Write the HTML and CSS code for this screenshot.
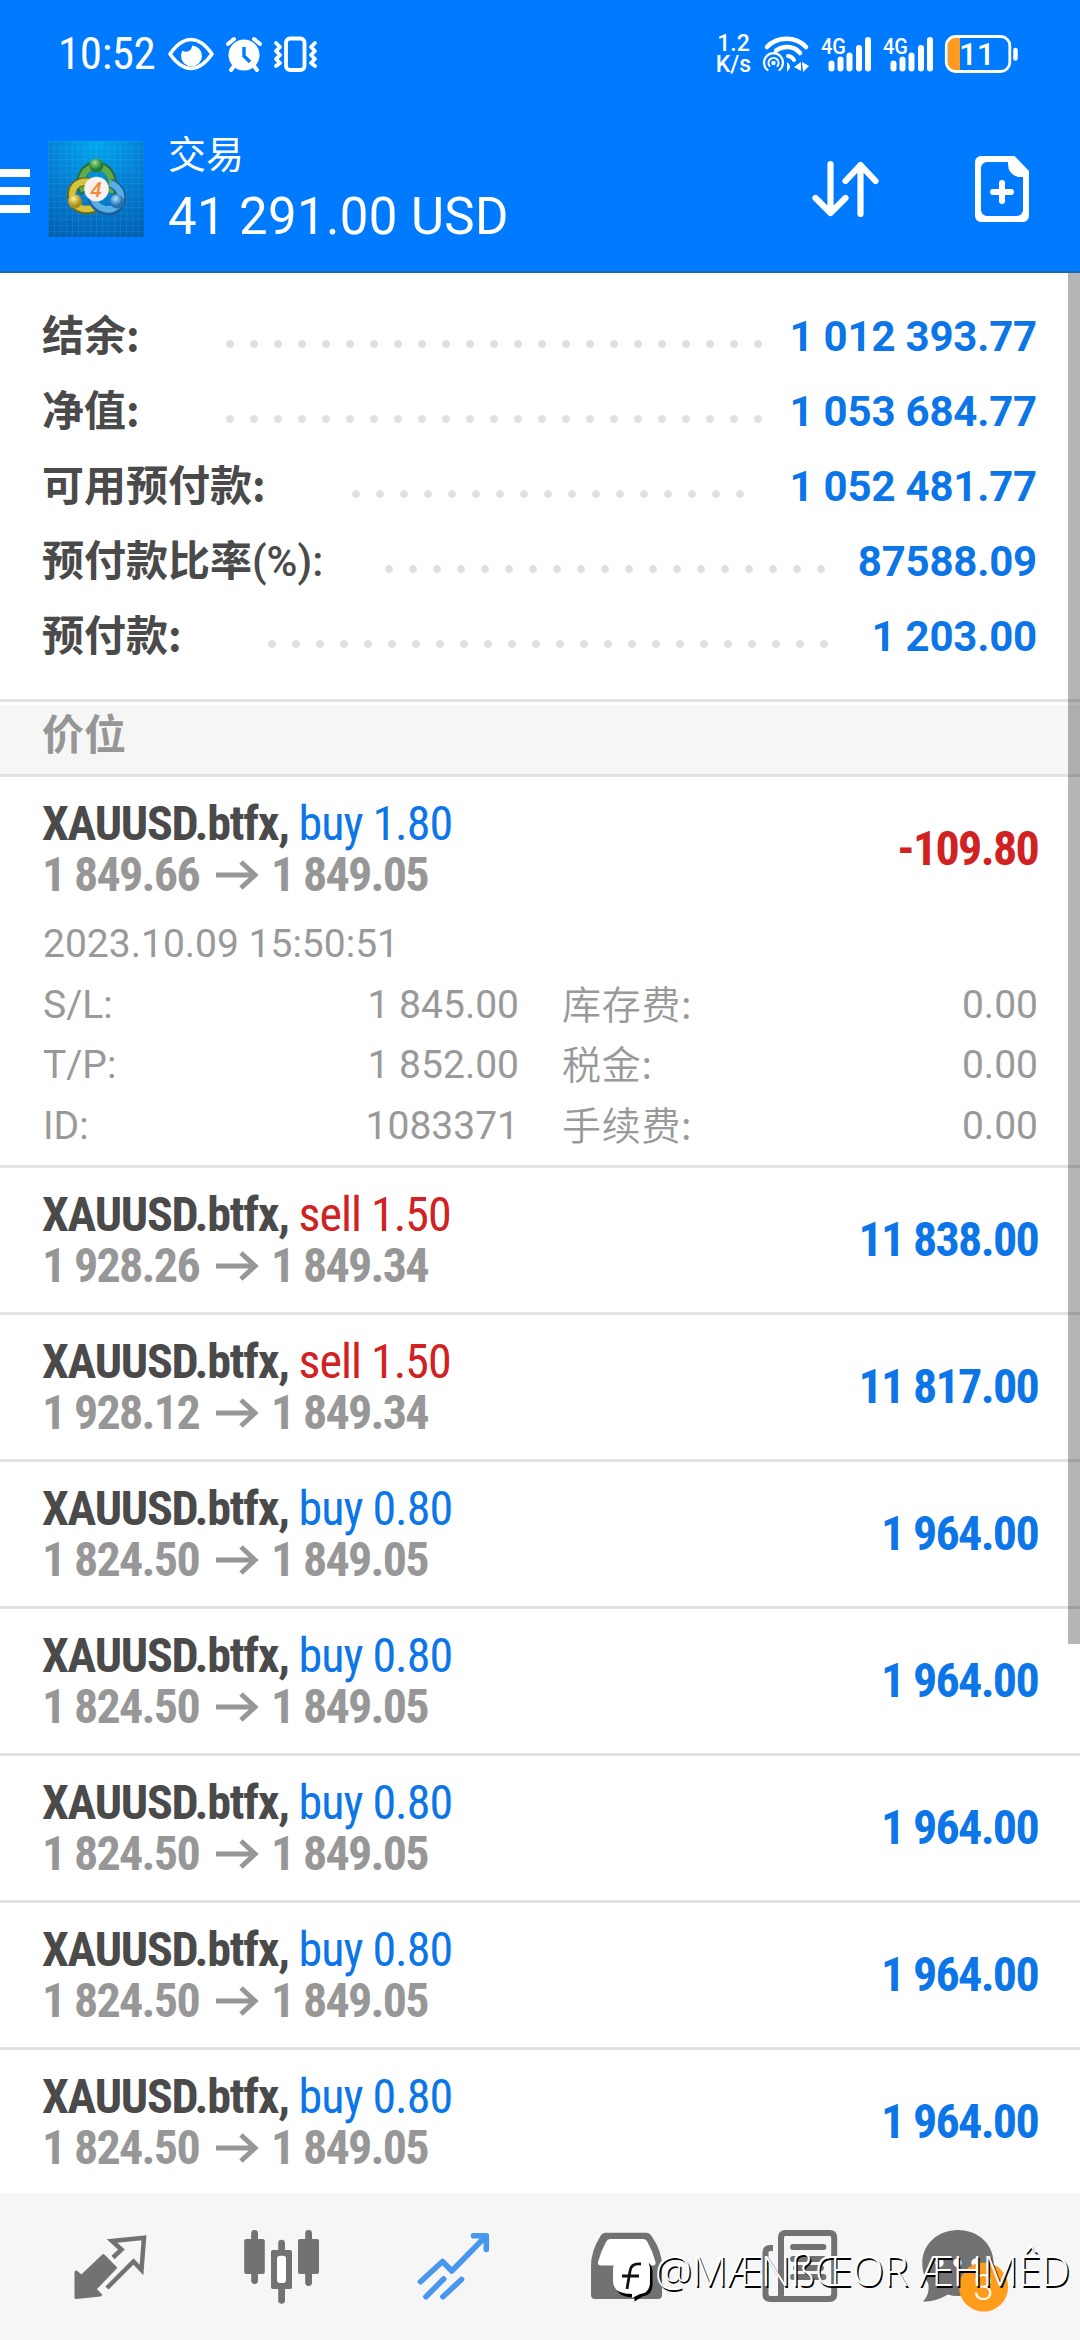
FILE: index.html
```
<!DOCTYPE html>
<html lang="zh-CN">
<head>
<meta charset="utf-8">
<title>交易</title>
<link rel="stylesheet" href="styles.css">
</head>
<body>
<div class="screen">
  <header class="top">
    <div class="status">
      <span class="clock">10:52</span>
      <svg class="st" width="46" height="36" viewBox="0 0 46 36"><path d="M2 18C9 8 15 3.500 23 3.500S37 8 44 18C37 28 31 32.500 23 32.500S9 28 2 18Z" fill="none" stroke="#fff" stroke-width="3.600" stroke-linejoin="round"/><path d="M24 9.500a10.500 10.500 0 1 1-11 10.500q0-3 1.500-5.500a6 6 0 0 0 9.500-5Z" fill="#fff"/></svg>
      <svg class="st" width="36" height="36" viewBox="0 0 36 36"><circle cx="18" cy="19" r="15.500" fill="#fff"/><path d="M2 8l6-5M34 8l-6-5M8 30l-3 4M28 30l3 4" stroke="#fff" stroke-width="4" stroke-linecap="round"/><path d="M18 11v9l6 6" fill="none" stroke="#007aff" stroke-width="3.400"/></svg>
      <svg class="st" width="43" height="36" viewBox="0 0 43 36"><g fill="none" stroke="#fff" stroke-width="3.800" stroke-linejoin="round"><rect x="12" y="2.500" width="18.500" height="31.500" rx="4"/><path d="M2 7l4 4-4 4 4 4-4 4 4 4-4 3" stroke-linecap="round"/><path d="M41 7l-4 4 4 4-4 4 4 4-4 4 4 3" stroke-linecap="round"/></g></svg>
      <div class="speed"><span>1.2</span><span>K/s</span></div>
      <svg class="st" width="46" height="36" viewBox="0 0 46 36"><g fill="none" stroke="#fff" stroke-linecap="round"><path d="M4 11C14 0 33 0 43 11" stroke-width="4.500"/><path d="M13 14.500c8-5.500 18-4.500 24 2.500" stroke-width="4.500"/><path d="M25 20q4 .5 6 4" stroke-width="4"/><path d="M4.500 34A9.500 9.500 0 1 1 16.500 34" stroke-width="2.200"/><path d="M6.500 30A5 5 0 1 1 14.500 30" stroke-width="2"/></g><circle cx="10.500" cy="27" r="2.200" fill="#fff"/><path d="M24 26q6 4 0 10ZM31 31l7-5v9ZM39 26l7 4-6 6Z" fill="#fff"/></svg>
      <svg class="st" width="50" height="36" viewBox="0 0 50 36"><text class="net" x="0" y="17.500" textLength="25" lengthAdjust="spacingAndGlyphs">4G</text><path d="M10.500 27.500v5M19.500 23.500v9M28.500 19.500v13M38 12v20.500M47 4v28.500" stroke="#fff" stroke-width="6" stroke-linecap="round"/></svg>
      <svg class="st" width="50" height="36" viewBox="0 0 50 36"><text class="net" x="0" y="17.500" textLength="25" lengthAdjust="spacingAndGlyphs">4G</text><path d="M10.500 27.500v5M19.500 23.500v9M28.500 19.500v13M38 12v20.500M47 4v28.500" stroke="#fff" stroke-width="6" stroke-linecap="round"/></svg>
      <svg class="st" width="74" height="38" viewBox="0 0 74 38"><path d="M15 2.500H9q-6 0-6 7v19q0 7 6 7h6Z" fill="#ff9a1f"/><rect x="1.300" y="1.500" width="63.500" height="35" rx="9" fill="none" stroke="#fff" stroke-width="2.800"/><path d="M70.500 15v8.500" stroke="#fff" stroke-width="4.500" stroke-linecap="round"/><text class="pct" x="14" y="30.300" textLength="36">11</text></svg>
    </div>
    <div class="bar">
      <div class="menu"><i></i><i></i><i></i></div>
      <svg class="logo" width="96" height="96" viewBox="0 0 96 96">
        <defs>
          <radialGradient id="sky" cx=".5" cy="0" r="1.050"><stop offset="0" stop-color="#00a9ec"/><stop offset=".45" stop-color="#0583d6"/><stop offset="1" stop-color="#0262b4"/></radialGradient>
          <pattern id="mesh" width="6" height="6" patternUnits="userSpaceOnUse"><path d="M0 .5H6M.5 0V6" stroke="#58c0ff" stroke-opacity=".12" stroke-width="1"/></pattern>
          <radialGradient id="g" cx=".4" cy=".3"><stop offset="0" stop-color="#9be08b"/><stop offset="1" stop-color="#1f7f35"/></radialGradient>
          <radialGradient id="y" cx=".4" cy=".3"><stop offset="0" stop-color="#fff39a"/><stop offset="1" stop-color="#a88f1d"/></radialGradient>
          <radialGradient id="b" cx=".4" cy=".3"><stop offset="0" stop-color="#b4e2fb"/><stop offset="1" stop-color="#2272b4"/></radialGradient>
        </defs>
        <rect width="96" height="96" fill="url(#sky)"/><rect width="96" height="96" fill="url(#mesh)"/>
        <path d="M36 52c-7-12-1-27 12-27s20 13 14 27" fill="none" stroke="#2b6a35" stroke-width="9"/>
        <path d="M36 50c-6-11 0-24 12-24s19 12 14 26" fill="none" stroke="#5cab4c" stroke-width="6.500"/>
        <path d="M42 41c-14-2-21 7-18 18 3 10 14 12 24 8" fill="none" stroke="#5f6a24" stroke-width="9"/>
        <path d="M42 41c-14-2-20 7-17 18 3 9 13 11 23 7" fill="none" stroke="#d3c43c" stroke-width="6.500"/>
        <path d="M62 42c12 5 15 16 8 24-7 7-21 5-26-8" fill="none" stroke="#1c5f9c" stroke-width="9"/>
        <path d="M62 42c12 5 14 16 7 23-7 6-19 4-24-7" fill="none" stroke="#5aafe2" stroke-width="6.500"/>
        <circle cx="48.300" cy="24.500" r="7" fill="url(#g)"/><circle cx="27" cy="60.500" r="7" fill="url(#y)"/><circle cx="69" cy="60.500" r="7" fill="url(#b)"/>
        <circle cx="48.500" cy="48" r="12.300" fill="#f6f1ee"/>
        <text class="four" x="48" y="55.500">4</text>
      </svg>
      <div class="titles"><div class="title">交易</div><div class="total">41 291.00 USD</div></div>
      <svg width="68" height="56" viewBox="0 0 68 56"><path d="M18.500 3v49M3.500 37l15 15 15-15M48.500 53V4M33.500 20l15-16 15 16" fill="none" stroke="#fff" stroke-width="6.200" stroke-linecap="round" stroke-linejoin="round"/></svg>
      <svg width="54" height="66" viewBox="0 0 54 66"><path fill="#fff" fill-rule="evenodd" d="M6 0H39.500L54 15V60a6 6 0 0 1-6 6H6a6 6 0 0 1-6-6V6A6 6 0 0 1 6 0ZM12 6a6 6 0 0 0-6 6V54a6 6 0 0 0 6 6H42a6 6 0 0 0 6-6V21H43Q33 18 33 8V6Z"/><path d="M27 27v18M18 36h18" stroke="#fff" stroke-width="6" stroke-linecap="round"/></svg>
    </div>
  </header>

  <main class="content">
    <section class="account">
      <div class="line"><span class="label">结余:</span><i class="dots" style="--n:23"></i><span class="value">1 012 393.77</span></div>
      <div class="line"><span class="label">净值:</span><i class="dots" style="--n:23"></i><span class="value">1 053 684.77</span></div>
      <div class="line"><span class="label">可用预付款:</span><i class="dots" style="--n:17"></i><span class="value">1 052 481.77</span></div>
      <div class="line"><span class="label">预付款比率<span class="latin">(%):</span></span><i class="dots near" style="--n:19"></i><span class="value">87588.09</span></div>
      <div class="line"><span class="label">预付款:</span><i class="dots" style="--n:24"></i><span class="value">1 203.00</span></div>
    </section>
    <h2 class="section">价位</h2>

    <article class="position">
      <div class="head">
        <div><div class="symbol">XAUUSD.btfx, <span class="buy">buy 1.80</span></div>
        <div class="prices">1 849.66<svg class="arrow" viewBox="0 0 42 30"><path d="M0 15H38M25 2L39 15L25 28" /></svg>1 849.05</div></div>
        <div class="profit loss">-109.80</div>
      </div>
      <div class="details">
        <span class="date">2023.10.09 15:50:51</span>
        <span>S/L:</span><span class="num">1 845.00</span><span class="cjk">库存费:</span><span class="num">0.00</span>
        <span>T/P:</span><span class="num">1 852.00</span><span class="cjk">税金:</span><span class="num">0.00</span>
        <span>ID:</span><span class="num">1083371</span><span class="cjk">手续费:</span><span class="num">0.00</span>
      </div>
    </article>
    <article class="position"><div class="head">
      <div><div class="symbol">XAUUSD.btfx, <span class="sell">sell 1.50</span></div>
      <div class="prices">1 928.26<svg class="arrow" viewBox="0 0 42 30"><path d="M0 15H38M25 2L39 15L25 28"/></svg>1 849.34</div></div>
      <div class="profit">11 838.00</div></div></article>
    <article class="position"><div class="head">
      <div><div class="symbol">XAUUSD.btfx, <span class="sell">sell 1.50</span></div>
      <div class="prices">1 928.12<svg class="arrow" viewBox="0 0 42 30"><path d="M0 15H38M25 2L39 15L25 28"/></svg>1 849.34</div></div>
      <div class="profit">11 817.00</div></div></article>
    <article class="position"><div class="head">
      <div><div class="symbol">XAUUSD.btfx, <span class="buy">buy 0.80</span></div>
      <div class="prices">1 824.50<svg class="arrow" viewBox="0 0 42 30"><path d="M0 15H38M25 2L39 15L25 28"/></svg>1 849.05</div></div>
      <div class="profit">1 964.00</div></div></article>
    <article class="position"><div class="head">
      <div><div class="symbol">XAUUSD.btfx, <span class="buy">buy 0.80</span></div>
      <div class="prices">1 824.50<svg class="arrow" viewBox="0 0 42 30"><path d="M0 15H38M25 2L39 15L25 28"/></svg>1 849.05</div></div>
      <div class="profit">1 964.00</div></div></article>
    <article class="position"><div class="head">
      <div><div class="symbol">XAUUSD.btfx, <span class="buy">buy 0.80</span></div>
      <div class="prices">1 824.50<svg class="arrow" viewBox="0 0 42 30"><path d="M0 15H38M25 2L39 15L25 28"/></svg>1 849.05</div></div>
      <div class="profit">1 964.00</div></div></article>
    <article class="position"><div class="head">
      <div><div class="symbol">XAUUSD.btfx, <span class="buy">buy 0.80</span></div>
      <div class="prices">1 824.50<svg class="arrow" viewBox="0 0 42 30"><path d="M0 15H38M25 2L39 15L25 28"/></svg>1 849.05</div></div>
      <div class="profit">1 964.00</div></div></article>
    <article class="position"><div class="head">
      <div><div class="symbol">XAUUSD.btfx, <span class="buy">buy 0.80</span></div>
      <div class="prices">1 824.50<svg class="arrow" viewBox="0 0 42 30"><path d="M0 15H38M25 2L39 15L25 28"/></svg>1 849.05</div></div>
      <div class="profit">1 964.00</div></div></article>
    <div class="scrollbar"></div>
  </main>

  <nav class="tabs">
    <svg viewBox="0 0 96 96"><path d="M14 53l5.300 4.500L41.300 36.500 53.500 48.700 33 70l5.500 6L14 78.500Z" fill="#727272" stroke="#727272" stroke-width="3" stroke-linejoin="round"/><path d="M51 38.500l8.500-8L50 22l32-3.200L79.500 51l-8-8.500L45 69" fill="none" stroke="#727272" stroke-width="4.500"/></svg>
    <svg viewBox="0 0 96 96"><g fill="#727272"><rect x="17.200" y="11" width="6.800" height="54" rx="3.400"/><rect x="10.200" y="20" width="20.600" height="35" rx="2"/><rect x="44.200" y="20.700" width="6.800" height="64" rx="3.400"/><rect x="37" y="31" width="21" height="39" rx="2"/><rect x="71.200" y="11" width="6.800" height="56" rx="3.400"/><rect x="64" y="20" width="21" height="35" rx="2"/></g><rect x="43" y="36.700" width="9" height="27.300" rx="3" fill="#fff"/></svg>
    <svg viewBox="0 0 96 96"><path d="M14.500 62.700L36.500 42.500 45.800 52 80 17M67.500 16.800H80.300V30.500M37.600 60L20 77.700M55.500 60.500L36.900 77.700" fill="none" stroke="#4897ee" stroke-width="5.600" stroke-linecap="round" stroke-linejoin="round"/></svg>
    <svg viewBox="0 0 96 96"><path fill="#727272" d="M28 13.700H68q4 0 6 4Q84 32 84 47V76q0 4-4 4H17q-4 0-4-4V47Q13 32 22 17.700 24 13.700 28 13.700Z"/><path fill="#fff" d="M32 20H65q3 0 4.500 3 5 9 8 20 .6 3.500-2.500 3.500H23q-3.500 0-3-3.500 3-11 8-20Q29.500 20 32 20Z"/></svg>
    <svg viewBox="0 0 96 96"><path d="M23 29H20q-4.500 0-4.500 4.500V75q0 5 5 5H79q5.200 0 5.200-5V18.500q0-4.500-4.500-4.500H35.500Q31 14 31 18.500V76q0 4-4 4" fill="none" stroke="#727272" stroke-width="6"/><path d="M43 28H73.500M43 40H73.500M43 58H73.500M46 49H71" stroke="#727272" stroke-width="5.800" stroke-linecap="round"/></svg>
    <svg viewBox="0 0 96 96"><path fill="#727272" d="M36 11C56 11 71.600 25 71.600 44S56 77 36 77q-6 0-10-1.500Q14 82.700 1 82.700 8.500 74 6 64 .3 56 .3 44C.3 25 16 11 36 11Z"/><g fill="#fff"><circle cx="17.500" cy="43.700" r="4.200"/><circle cx="35.500" cy="43.700" r="4.200"/><circle cx="53.500" cy="43.700" r="4.200"/></g><circle cx="61.600" cy="68" r="24.500" fill="#ff9c1a"/><text class="badge" x="61.600" y="80.500">3</text></svg>
  </nav>

  <svg class="watermark" width="470" height="70" viewBox="0 0 470 70">
    <g transform="translate(2.500 2.500)" fill="#000"><path d="M19 14H28Q40 14 40 26V38Q40 49 30 50L22 55V51Q3 51 3 37V26Q3 14 19 14Z"/></g>
    <path d="M19 13H28Q40 13 40 26V38Q40 49 30 50L22 54V50Q3 50 3 37V26Q3 13 19 13Z" fill="#fff"/>
    <path d="M31 20q-10-1-11 7L17 45M12 32h17" fill="none" stroke="#111" stroke-width="2.800"/>
    <text class="wm" x="45" y="42" textLength="415" lengthAdjust="spacingAndGlyphs">@MÆNßŒOR ÆHMÊD</text>
  </svg>
</div>
</body>
</html>
```
FILE: styles.css
```
* { box-sizing: border-box; }
body { margin: 0; background: #fff; font-family: Roboto, "Noto Sans CJK SC", sans-serif; }
svg { display: block; flex: none; overflow: visible; }
.screen { position: relative; width: 1080px; height: 2340px; overflow: hidden; display: flex; flex-direction: column; }

.top { flex: none; height: 273px; background: #007aff; border-bottom: 2px solid #1a66b8; color: #fff; }
.status { height: 108px; display: flex; align-items: center; gap: 12px; padding: 0 61px 0 58px; }
.clock { width: 98px; font-size: 45px; line-height: 54px; font-stretch: 80%; letter-spacing: -.4px; white-space: nowrap; }
.speed { margin-left: auto; width: 35px; display: flex; flex-direction: column; align-items: center; font-size: 23px; line-height: 21px; font-weight: 500; }
.net { font-size: 22px; font-weight: 500; fill: #fff; }
.pct { font-size: 32px; font-weight: 500; fill: #fff; }
.bar { display: flex; align-items: center; height: 162px; padding-right: 51px; }
.menu { width: 30px; display: flex; flex-direction: column; gap: 10px; margin-top: 4px; }
.menu i { height: 8px; background: #fff; }
.logo { margin-left: 18px; }
.four { font-size: 21px; font-weight: 500; font-style: italic; fill: #f08a3c; text-anchor: middle; }
.titles { margin: 5px auto 0 24px; }
.title { font-size: 38px; line-height: 54px; margin-top: -3px; }
.total { font-size: 51px; line-height: 70px; letter-spacing: .35px; white-space: nowrap; }
.bar svg + svg { margin-left: 95px; }

.content { position: relative; flex: 1; min-height: 0; overflow: hidden; }
.account { height: 429px; padding: 26px 43px 0 42px; border-bottom: 3px solid #e2e2e2; }
.line { display: flex; align-items: baseline; height: 75px; font-size: 42px; line-height: 75px; }
.label { font-family: "Noto Sans CJK SC", sans-serif; font-weight: 700; line-height: 42px; color: #4a4a4a; white-space: nowrap; }
.latin { font-family: Roboto, sans-serif; font-weight: 500; }
.dots { width: calc(var(--n) * 24px); height: 8px; margin-left: 78px; background: radial-gradient(circle at 12px 4px, #e0e0e0 3.500px, transparent 4.300px) 0 0 / 24px 8px; }
.line .dots { transform: translateY(-3px); }
.dots.near { margin-left: 54px; }
.value { margin-left: auto; font-weight: 700; color: #0c75e8; white-space: nowrap; letter-spacing: -.2px; }
.section { margin: 3px 0 0; height: 72px; padding-left: 42px; background: #f6f6f6; border-bottom: 3px solid #e2e2e2; font-size: 42px; line-height: 61px; font-weight: 700; color: #969696; }

.position { border-bottom: 3px solid #e2e2e2; }
.head { display: flex; justify-content: space-between; align-items: center; height: 144px; padding: 0 42px; font-size: 48px; line-height: 51px; font-stretch: 75%; font-weight: 700; letter-spacing: -1.250px; white-space: nowrap; }
.symbol { color: #4a4a4a; }
.symbol span { font-weight: 400; letter-spacing: -1px; }
.buy { color: #0c75e8; }
.sell { color: #d02222; }
.prices { display: flex; align-items: center; color: #979797; letter-spacing: -1.700px; }
.arrow { width: 42px; height: 30px; margin: 1px 13px 0 17px; fill: none; stroke: #979797; stroke-width: 5px; }
.profit { color: #0c75e8; letter-spacing: -1.700px; margin-top: -1px; }
.loss { color: #d02222; }
.details { display: grid; grid-template-columns: 130px 346px 1fr 200px; grid-auto-rows: 60.700px; margin-top: -7px; padding: 0 42px 8px 43px; font-size: 39px; line-height: 60.700px; color: #999; }
.date { grid-column: 1 / -1; }
.num { text-align: right; }
.cjk { padding-left: 43px; font-family: "Noto Sans CJK SC", sans-serif; font-weight: 350; line-height: 54px; letter-spacing: .7px; }

.scrollbar { position: absolute; top: 0; right: 0; width: 12px; height: 1371px; background: rgba(0, 0, 0, .29); }

.tabs { flex: none; height: 147px; display: flex; align-items: center; gap: 76px; padding: 0 62px; background: #f6f6f6; }
.tabs svg { width: 96px; height: 96px; }
.badge { font-size: 36px; font-weight: 300; fill: #fff; text-anchor: middle; }
.watermark { position: absolute; left: 610px; top: 2244px; }
.wm { font-family: "Open Sans", "Noto Sans", sans-serif; font-size: 42px; font-weight: 300; fill: #fff; text-shadow: 1.500px 1.500px 0 #000; }
```
